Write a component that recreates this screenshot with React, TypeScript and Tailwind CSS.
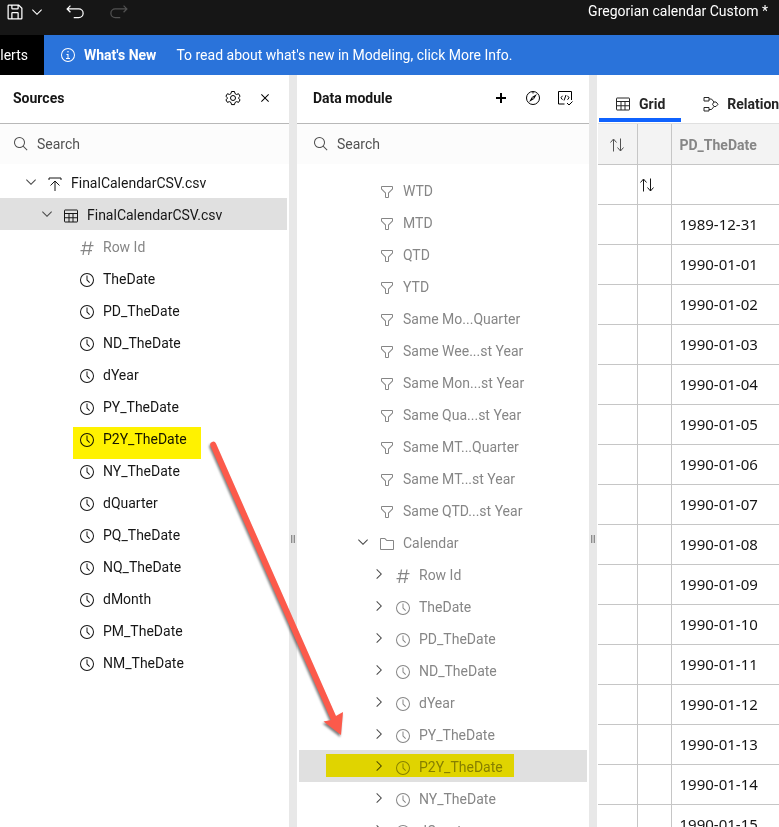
import type { ReactNode } from 'react';

type IconProps = { className?: string };

const Svg = ({ className = 'size-4', children }: { className?: string; children: ReactNode }) => (
    <svg viewBox="0 0 32 32" className={`shrink-0 ${className}`} fill="currentColor" aria-hidden="true">
        {children}
    </svg>
);

const SaveIcon = ({ className }: IconProps) => (
    <Svg className={className}>
        <path d="M27.71 9.29l-5-5A1 1 0 0 0 22 4H6A2 2 0 0 0 4 6V26a2 2 0 0 0 2 2H26a2 2 0 0 0 2-2V10A1 1 0 0 0 27.71 9.29ZM12 6h8v4H12Zm8 20H12V18h8Zm2 0V18a2 2 0 0 0-2-2H12a2 2 0 0 0-2 2v8H6V6h4v4a2 2 0 0 0 2 2h8a2 2 0 0 0 2-2V6.41l4 4V26Z" />
    </Svg>
);

const UndoIcon = ({ className }: IconProps) => (
    <Svg className={className}>
        <path d="M22 10H5.800L9.400 6.400 8 5 2 11l6 6 1.400-1.400L5.800 12H22a6 6 0 0 1 0 12H14v2h8a8 8 0 0 0 0-16Z" />
    </Svg>
);

const RedoIcon = ({ className }: IconProps) => (
    <Svg className={className}>
        <path d="M10 10H26.200L22.600 6.400 24 5l6 6-6 6-1.400-1.400L26.200 12H10a6 6 0 0 0 0 12h8v2H10a8 8 0 0 1 0-16Z" />
    </Svg>
);

const ChevronDown = ({ className }: IconProps) => (
    <Svg className={className}>
        <path d="M16 22 6 12l1.4-1.4 8.6 8.6 8.6-8.6L26 12z" />
    </Svg>
);

const ChevronRight = ({ className }: IconProps) => (
    <Svg className={className}>
        <path d="M22 16 12 26l-1.4-1.4 8.6-8.6-8.6-8.6L12 6z" />
    </Svg>
);

const CloseIcon = ({ className }: IconProps) => (
    <Svg className={className}>
        <path d="M24 9.4 22.6 8 16 14.6 9.4 8 8 9.4l6.6 6.6L8 22.6 9.4 24l6.6-6.6 6.6 6.6 1.4-1.4-6.6-6.6z" />
    </Svg>
);

const SearchIcon = ({ className }: IconProps) => (
    <Svg className={className}>
        <path d="M29 27.59l-7.55-7.56a11 11 0 1 0-1.42 1.42L27.59 29ZM4 13a9 9 0 1 1 9 9A9 9 0 0 1 4 13Z" />
    </Svg>
);

const FilterIcon = ({ className }: IconProps) => (
    <Svg className={className}>
        <path d="M18 28H14a2 2 0 0 1-2-2V18.41L4.59 11A2 2 0 0 1 4 9.59V6A2 2 0 0 1 6 4H26a2 2 0 0 1 2 2V9.59A2 2 0 0 1 27.41 11L20 18.41V26A2 2 0 0 1 18 28ZM6 6V9.59l8 8V26h4V17.59l8-8V6Z" />
    </Svg>
);

const FolderIcon = ({ className }: IconProps) => (
    <Svg className={className}>
        <path d="M11.17 6l3.42 3.41.58.59H28V26H4V6h7.17m0-2H4A2 2 0 0 0 2 6V26a2 2 0 0 0 2 2H28a2 2 0 0 0 2-2V10a2 2 0 0 0-2-2H16L12.59 4.59A2 2 0 0 0 11.17 4Z" />
    </Svg>
);

const ClockIcon = ({ className }: IconProps) => (
    <Svg className={className}>
        <path d="M16 30A14 14 0 1 1 30 16 14 14 0 0 1 16 30Zm0-26A12 12 0 1 0 28 16 12 12 0 0 0 16 4Z" />
        <path d="M20.59 22 15 16.41V7h2v8.58l5 5.01z" />
    </Svg>
);

const HashIcon = ({ className }: IconProps) => (
    <Svg className={className}>
        <path d="M13 3 8 30M24 3l-5 27M6 11h23M3 21h23" fill="none" stroke="currentColor" strokeWidth="2.500" />
    </Svg>
);

const TableIcon = ({ className }: IconProps) => (
    <Svg className={className}>
        <path
            d="M4 4h24a1 1 0 0 1 1 1v22a1 1 0 0 1-1 1H4a1 1 0 0 1-1-1V5a1 1 0 0 1 1-1ZM3 11h26M3 19.500h26M12 11v17M20 11v17"
            fill="none"
            stroke="currentColor"
            strokeWidth="2"
        />
    </Svg>
);

const UploadIcon = ({ className }: IconProps) => (
    <Svg className={className}>
        <path d="M4 8V4h24v4M16 30V11M7 19l9-9 9 9" fill="none" stroke="currentColor" strokeWidth="2" />
    </Svg>
);

const InfoIcon = ({ className }: IconProps) => (
    <Svg className={className}>
        <path d="M16 30A14 14 0 1 1 30 16 14 14 0 0 1 16 30Zm0-26A12 12 0 1 0 28 16 12 12 0 0 0 16 4Z" />
        <path d="M17 22V14H13v2h2v6H12v2h8V22ZM16 8a1.500 1.500 0 1 0 1.500 1.500A1.500 1.500 0 0 0 16 8Z" />
    </Svg>
);

const GearIcon = ({ className }: IconProps) => (
    <Svg className={className}>
        <g fill="none" stroke="currentColor" strokeWidth="2">
            <path
                strokeLinejoin="round"
                d="M13 3h6l1 4.200 3 1.700 4.200-1.400 3 5.200-3.200 2.900v1l3.200 2.900-3 5.200-4.200-1.400-3 1.700-1 4.200h-6l-1-4.200-3-1.700-4.200 1.400-3-5.200L5 16.600v-1l-3.200-2.900 3-5.200L9 8.900l3-1.700Z"
            />
            <circle cx="16" cy="16" r="5" />
        </g>
    </Svg>
);

const PlusIcon = ({ className }: IconProps) => (
    <Svg className={className}>
        <path d="M14 6h4v8h8v4h-8v8h-4v-8H6v-4h8z" />
    </Svg>
);

const CompassIcon = ({ className }: IconProps) => (
    <Svg className={className}>
        <circle cx="16" cy="16" r="13" fill="none" stroke="currentColor" strokeWidth="2" />
        <path d="M24 8 18 18 8 24 14 14Z" />
        <path d="M15 4h2v3h-2z" />
        <circle cx="16" cy="16" r="1.500" fill="white" />
    </Svg>
);

const CodeCheckIcon = ({ className }: IconProps) => (
    <Svg className={className}>
        <g fill="none" stroke="currentColor" strokeWidth="2">
            <path d="M15 28H3V3h26v17M20 26l4 4L31 23M11 11.500l-3 4 3 4M21 11.500l3 4-3 4M18 10l-4 11" />
        </g>
    </Svg>
);

const RelationIcon = ({ className }: IconProps) => (
    <Svg className={className}>
        <g fill="none" stroke="currentColor" strokeWidth="2">
            <path d="M2 3h10v7H2ZM2 23h10v7H2ZM12 6h5l5 6M12 27h5l5-6" />
            <path d="M22 12h4l4 4.500-4 4.500h-4l-3-4.500Z" />
        </g>
    </Svg>
);

const SortIcon = ({ className }: IconProps) => (
    <Svg className={className}>
        <path d="M9 29V5M3 11l6-7 6 7M23 3v25M17 21l6 7 6-7" fill="none" stroke="currentColor" strokeWidth="2" />
    </Svg>
);

const icons = {
    upload: UploadIcon,
    table: TableIcon,
    hash: HashIcon,
    clock: ClockIcon,
    filter: FilterIcon,
    folder: FolderIcon
};

interface TreeItem {
    label: string;
    icon: keyof typeof icons;
    level: number;
    chevron?: 'down' | 'right';
    muted?: boolean;
    selected?: boolean;
    marked?: boolean;
}

const sourceFields = [
    'TheDate', 'PD_TheDate', 'ND_TheDate', 'dYear', 'PY_TheDate', 'P2Y_TheDate', 'NY_TheDate',
    'dQuarter', 'PQ_TheDate', 'NQ_TheDate', 'dMonth', 'PM_TheDate', 'NM_TheDate'
];

const sources: TreeItem[] = [
    { label: 'FinalCalendarCSV.csv', icon: 'upload', level: 0, chevron: 'down' },
    { label: 'FinalCalendarCSV.csv', icon: 'table', level: 1, chevron: 'down', selected: true },
    { label: 'Row Id', icon: 'hash', level: 2, muted: true },
    ...sourceFields.map((label): TreeItem => ({ label, icon: 'clock', level: 2, marked: label === 'P2Y_TheDate' }))
];

const filters = [
    'WTD', 'MTD', 'QTD', 'YTD', 'Same Mo...Quarter', 'Same Wee...st Year', 'Same Mon...st Year',
    'Same Qua...st Year', 'Same MT...Quarter', 'Same MT...st Year', 'Same QTD...st Year'
];

const moduleFields = ['TheDate', 'PD_TheDate', 'ND_TheDate', 'dYear', 'PY_TheDate', 'P2Y_TheDate', 'NY_TheDate', 'dQuarter'];

const moduleItems: TreeItem[] = [
    ...filters.map((label): TreeItem => ({ label, icon: 'filter', level: 2, muted: true })),
    { label: 'Calendar', icon: 'folder', level: 2, chevron: 'down', muted: true },
    { label: 'Row Id', icon: 'hash', level: 3, chevron: 'right', muted: true },
    ...moduleFields.map((label): TreeItem => ({
        label,
        icon: 'clock',
        level: 3,
        chevron: 'right',
        muted: true,
        selected: label === 'P2Y_TheDate',
        marked: label === 'P2Y_TheDate'
    }))
];

const dates = [
    '1989-12-31', '1990-01-01', '1990-01-02', '1990-01-03', '1990-01-04', '1990-01-05', '1990-01-06', '1990-01-07',
    '1990-01-08', '1990-01-09', '1990-01-10', '1990-01-11', '1990-01-12', '1990-01-13', '1990-01-14', '1990-01-15'
];

const indents = ['pl-[23px]', 'pl-[39px]', 'pl-[55px]'];

const TreeRow = ({ item, indent, markClass }: { item: TreeItem; indent: string; markClass: string }) => {
    const Icon = icons[item.icon];

    return (
        <li
            role="treeitem"
            aria-selected={!!item.selected}
            className={`relative flex h-8 items-center gap-2 whitespace-nowrap ${indent} ${item.selected ? 'bg-[#e0e0e0]' : ''} ${item.muted ? 'text-[#868686]' : 'text-[#161616]'}`}
        >
            {item.chevron ? (
                <button type="button" aria-label={`Toggle ${item.label}`} className="text-[#4a4a4a]">
                    {item.chevron === 'down' ? <ChevronDown /> : <ChevronRight />}
                </button>
            ) : (
                <span className="w-4" />
            )}
            <Icon className="mt-1 size-4" />
            <span className="pt-0.5">{item.label}</span>
            {item.marked && <span className={`absolute bg-[#fff200] mix-blend-multiply ${markClass}`} />}
        </li>
    );
};

const SearchBox = ({ id }: { id: string }) => (
    <label htmlFor={id} className="flex h-10 shrink-0 items-center gap-2 bg-[#fcfcfc] px-[13px] text-[#525252]">
        <SearchIcon />
        <input id={id} type="text" placeholder="Search" className="min-w-0 flex-1 bg-transparent outline-none placeholder:text-[#525252]" />
    </label>
);

const Splitter = () => (
    <div className="flex w-2 shrink-0 items-center justify-center bg-[#e8e8e8] pt-44">
        <div className="h-2 w-1 border-x border-[#8d8d8d] bg-[#c6c6c6]" />
    </div>
);

const TopBar = () => (
    <header className="flex h-[35px] shrink-0 items-start justify-between bg-[#161616] pr-[11px] pl-[5px] text-white">
        <div className="flex h-[23px] items-center">
            <button type="button" aria-label="Save"><SaveIcon className="size-5" /></button>
            <button type="button" aria-label="Save options" className="ml-1"><ChevronDown className="size-4" /></button>
            <button type="button" aria-label="Undo" className="ml-5"><UndoIcon className="size-5" /></button>
            <button type="button" aria-label="Redo" disabled className="ml-6 text-[#525252]"><RedoIcon className="size-5" /></button>
        </div>
        <h1 className="leading-[22px]">Gregorian calendar Custom *</h1>
    </header>
);

const Banner = () => (
    <div className="flex h-10 shrink-0 items-center bg-[#2a73da] whitespace-nowrap text-white">
        <div className="flex h-full w-11 shrink-0 items-center justify-end overflow-hidden bg-black pr-4">Alerts</div>
        <InfoIcon className="ml-4 size-4" />
        <strong className="ml-2 font-bold">What's New</strong>
        <span className="ml-5">To read about what's new in Modeling, click More Info.</span>
    </div>
);

const SourcesPanel = () => (
    <section className="flex w-[289px] shrink-0 flex-col bg-white">
        <div className="flex h-[49px] shrink-0 items-center border-b border-[#b8b8b8] pr-4 pb-0.5 pl-[13px]">
            <h2 className="flex-1 font-bold text-[#161616]">Sources</h2>
            <button type="button" aria-label="Settings"><GearIcon /></button>
            <button type="button" aria-label="Close" className="ml-4"><CloseIcon /></button>
        </div>
        <SearchBox id="search-sources" />
        <ul role="tree" className="mt-0.5 mr-0.5">
            {sources.map((item, i) => (
                <TreeRow key={i} item={item} indent={indents[item.level]} markClass="left-[73px] top-[5px] h-8 w-32" />
            ))}
        </ul>
    </section>
);

const ModulePanel = () => (
    <section className="flex w-[292px] shrink-0 flex-col bg-white">
        <div className="flex h-[49px] shrink-0 items-center gap-4 border-b border-[#b8b8b8] px-4 pb-0.5">
            <h2 className="flex-1 font-bold text-[#161616]">Data module</h2>
            <button type="button" aria-label="Add"><PlusIcon /></button>
            <button type="button" aria-label="Explore"><CompassIcon /></button>
            <button type="button" aria-label="Validate"><CodeCheckIcon /></button>
        </div>
        <div className="bg-[#fcfcfc] pl-[3px]">
            <SearchBox id="search-module" />
        </div>
        <ul role="tree" className="mx-0.5 mt-2.5">
            {moduleItems.map((item) => (
                <TreeRow
                    key={item.label}
                    item={item}
                    indent={item.level === 3 ? 'pl-[72px]' : 'pl-[56px]'}
                    markClass="left-[27px] top-1 h-[23px] w-[188px]"
                />
            ))}
        </ul>
    </section>
);

const GridPanel = () => (
    <main className="flex min-w-0 flex-1 flex-col overflow-hidden bg-white pl-px">
        <div role="tablist" className="flex h-[49px] shrink-0 border-b border-[#e0e0e0] pl-px font-bold text-[#262626]">
            <button type="button" role="tab" aria-selected="true" className="mb-px flex shrink-0 items-center gap-2 border-b-4 border-[#0f62fe] px-4 pt-3.5">
                <TableIcon />
                Grid
            </button>
            <button type="button" role="tab" aria-selected="false" className="mb-px ml-1.5 flex shrink-0 items-center gap-2 border-b-4 border-transparent px-4 pt-3.5">
                <RelationIcon />
                Relationships
            </button>
        </div>
        <table className="w-full table-fixed border-collapse font-['Noto_Sans','Open_Sans',sans-serif] text-[15px] text-[#161616]">
            <colgroup>
                <col className="w-[39px]" />
                <col className="w-[34px]" />
                <col />
            </colgroup>
            <thead>
                <tr className="h-10 border-b border-[#c6c6c6] bg-[#f3f3f3] text-[#868686]">
                    <th className="border-r border-[#c6c6c6] pt-0.5"><SortIcon className="mx-auto size-4 text-[#525252]" /></th>
                    <th className="border-r border-[#c6c6c6]" />
                    <th className="px-2 pt-0.5 text-left font-['Roboto','Noto_Sans',sans-serif] text-sm font-bold">PD_TheDate</th>
                </tr>
            </thead>
            <tbody>
                <tr className="h-10 border-b border-[#c6c6c6]">
                    <td className="border-r border-[#c6c6c6]" />
                    <td className="border-r border-[#c6c6c6] pt-0.5"><SortIcon className="ml-px size-4" /></td>
                    <td />
                </tr>
                {dates.map((date) => (
                    <tr key={date} className="h-10 border-b border-[#c6c6c6]">
                        <td className="border-r border-[#c6c6c6]" />
                        <td className="border-r border-[#c6c6c6]" />
                        <td className="px-2 pt-0.5 whitespace-nowrap">{date}</td>
                    </tr>
                ))}
            </tbody>
        </table>
    </main>
);

// Annotation drawn over both panels, from the source column to its copy in the module
const DragArrow = () => (
    <svg
        className="pointer-events-none absolute top-0 left-0 drop-shadow-[-1px_2px_1px_rgba(0,0,0,0.5)]"
        width="360"
        height="750"
        viewBox="0 0 360 750"
        aria-hidden="true"
    >
        <path d="M210.500 446A3 3 0 0 1 216 443.500L336 716 343 712 341 735 323.500 721.500 331 720Z" fill="#fc5a4b" />
    </svg>
);

export default function App() {
    return (
        <div className="relative flex h-screen flex-col overflow-hidden bg-white font-['Roboto','Noto_Sans',sans-serif] text-sm">
            <TopBar />
            <Banner />
            <div className="flex min-h-0 flex-1">
                <SourcesPanel />
                <Splitter />
                <ModulePanel />
                <Splitter />
                <GridPanel />
            </div>
            <DragArrow />
        </div>
    );
}
